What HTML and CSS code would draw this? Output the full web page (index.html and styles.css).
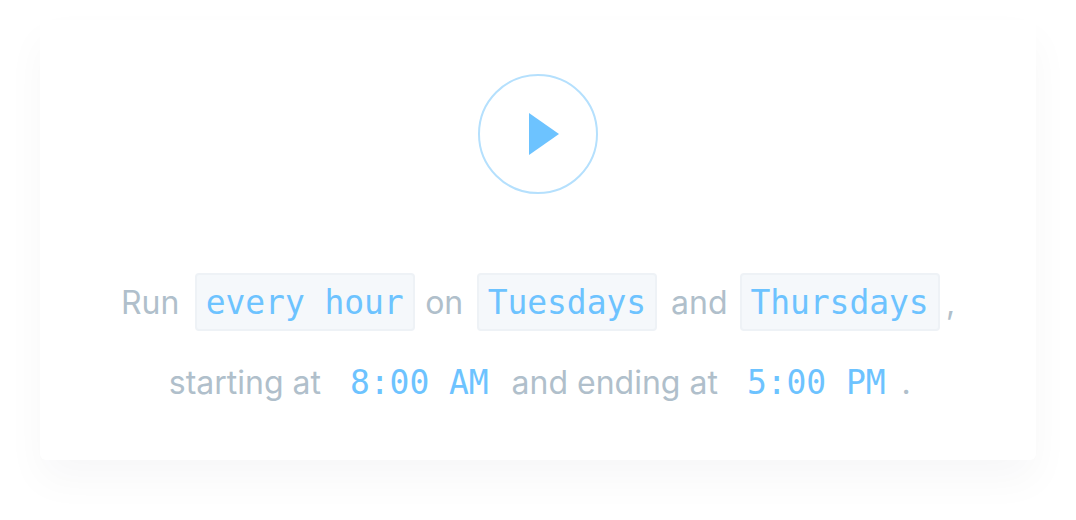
FILE: index.html
```html
<!DOCTYPE html>
<html lang="en">
<head>
<meta charset="utf-8">
<title>Schedule</title>
<link rel="stylesheet" href="styles.css">
</head>
<body>
<main class="card">
  <button class="play" aria-label="Run">
    <svg class="play-icon" width="30" height="42" viewBox="0 0 30 42"><path d="M0 0L30 21L0 42Z"/></svg>
  </button>
  <p class="sentence">
    <span class="line">Run <span class="chip chip-first">every hour</span> on <span class="chip chip-wide">Tuesdays</span> and <span class="chip chip-last">Thursdays</span> ,</span>
    <span class="line">starting at <span class="chip chip-plain">8:00 AM</span> and ending at <span class="chip chip-plain chip-close">5:00 PM</span> <span class="period">.</span></span>
  </p>
</main>
</body>
</html>
```
FILE: styles.css
```css
* { box-sizing: border-box; }
html, body { height: 100%; }
body {
  margin: 0;
  padding: 20px 40px 60px;
  background: #fff;
  font-family: "Inter", "Liberation Sans", sans-serif;
}
.card {
  height: 440px;
  background: #fff;
  border-radius: 6px;
  box-shadow: 0 20px 40px rgba(20, 30, 50, 0.035);
  display: flex;
  flex-direction: column;
  align-items: center;
  padding-top: 54px;
}
.play {
  width: 120px;
  height: 120px;
  padding: 0 0 0 12px;
  border: 2px solid #b5e0fd;
  border-radius: 50%;
  background: none;
  display: flex;
  align-items: center;
  justify-content: center;
}
.play-icon { display: block; fill: #6dc3ff; }
.sentence {
  margin: 69px 0 0;
  color: #b0bfcb;
  font-size: 32px;
  text-align: center;
}
.line {
  display: block;
  height: 80px;
  line-height: 80px;
}
.chip {
  display: inline-block;
  height: 58px;
  line-height: 56px;
  padding: 0 9px 0 8.4px;
  margin: 0 1.5px 0 5px;
  border: 2px solid #eef2f6;
  border-radius: 4px;
  background: #f5f8fb;
  color: #6dc3ff;
  font-family: "DejaVu Sans Mono", monospace;
  font-size: 33px;
  letter-spacing: -0.07px;
  vertical-align: baseline;
}
.chip-first { margin-left: 7px; }
.chip-wide { margin-right: 5px; }
.chip-last { margin: 0 -2.7px 0 3.5px; }
.chip-plain {
  margin: 0 3px 0 9.6px;
  border-color: transparent;
  background: none;
}
.chip-close { margin-right: -4px; }
.period { margin-right: -3.5px; }
```
